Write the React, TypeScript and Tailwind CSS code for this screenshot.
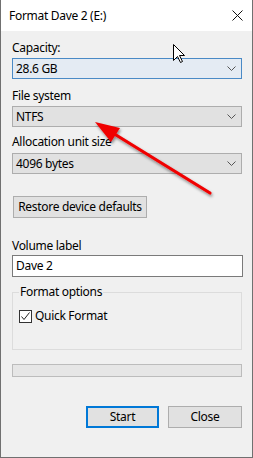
import React from "react";

const font = { fontFamily: '"Noto Sans", "Segoe UI", sans-serif', letterSpacing: "-0.3px" };

function Chevron() {
  return (
    <svg width="9" height="5" viewBox="0 0 9 5" className="shrink-0">
      <path d="M0.5 0.5 L4.5 4.5 L8.5 0.5" fill="none" stroke="#555" strokeWidth="1" />
    </svg>
  );
}

function Combo({ value, active }: { value: string; active?: boolean }) {
  return (
    <div
      className={
        "ml-[11px] w-[230px] h-[21px] border flex items-center justify-between pl-[3px] pr-[5px] " +
        (active ? "border-[#4a8ac6] bg-[#e4ebf3]" : "border-[#adadad] bg-[#e1e1e1]")
      }
    >
      <span className="text-[12px] leading-[16px] text-black">{value}</span>
      <Chevron />
    </div>
  );
}

export default function App() {
  return (
    <div
      className="relative w-[253px] h-[458px] bg-[#f0f0f0] border-l border-r border-b border-[#707070] flex flex-col text-black overflow-hidden"
      style={font}
    >
      {/* title bar */}
      <div className="h-[31px] bg-white flex items-center justify-between pl-[8px] pr-[9px] shrink-0">
        <span className="text-[12px] leading-[16px]">Format Dave 2 (E:)</span>
        <svg width="11" height="11" viewBox="0 0 11 11">
          <path d="M0.5 0.5 L10.5 10.5 M10.5 0.5 L0.5 10.5" stroke="#111" strokeWidth="1" />
        </svg>
      </div>

      <div className="flex flex-col pt-[9px]">
        <div className="ml-[11px] h-[16px] text-[12px] leading-[16px]">Capacity:</div>
        <div className="mt-[2px]">
          <Combo value="28.6 GB" active />
        </div>

        <div className="mt-[9px] ml-[11px] h-[16px] text-[12px] leading-[16px]">File system</div>
        <div className="mt-[2px]">
          <Combo value="NTFS" />
        </div>

        <div className="mt-[7px] ml-[11px] h-[16px] text-[12px] leading-[16px]">Allocation unit size</div>
        <div className="mt-[3px]">
          <Combo value="4096 bytes" />
        </div>

        <div className="mt-[22px] ml-[12px] w-[134px] h-[22px] border border-[#adadad] bg-[#e1e1e1] flex items-center justify-center text-[12px] leading-[16px]">
          Restore device defaults
        </div>

        <div className="mt-[20px] ml-[11px] h-[16px] text-[12px] leading-[16px]">Volume label</div>
        <div className="mt-[1px] ml-[11px] w-[231px] h-[22px] border border-[#7a7a7a] bg-white flex items-center pl-[3px] text-[12px] leading-[16px]">
          Dave 2
        </div>

        <div className="relative mt-[15px] ml-[11px] w-[230px] h-[58px] border border-[#dcdcdc]">
          <span className="absolute left-[6px] top-[-9px] px-[1px] bg-[#f0f0f0] text-[12px] leading-[16px]">
            Format options
          </span>
          <div className="absolute left-[6px] top-[15px] flex items-center gap-[3px]">
            <div className="w-[13px] h-[13px] border border-[#333] bg-white flex items-center justify-center">
              <svg width="11" height="11" viewBox="0 0 11 11">
                <path d="M1.5 5.5 L4 8.5 L9.5 1.5" fill="none" stroke="#222" strokeWidth="1" />
              </svg>
            </div>
            <span className="text-[12px] leading-[16px]">Quick Format</span>
          </div>
        </div>

        <div className="mt-[14px] ml-[11px] w-[230px] h-[13px] border border-[#bcbcbc] bg-[#e6e6e6]" />

        <div className="mt-[29px] ml-[85px] flex gap-[9px]">
          <div className="w-[73px] h-[22px] border-2 border-[#0078d7] bg-[#e1e1e1] flex items-center justify-center text-[12px] leading-[16px]">
            Start
          </div>
          <div className="w-[74px] h-[22px] border border-[#adadad] bg-[#e1e1e1] flex items-center justify-center text-[12px] leading-[16px]">
            Close
          </div>
        </div>
      </div>

      {/* overlay: red arrow and mouse cursor */}
      <svg className="absolute left-[-1px] top-0 pointer-events-none" width="253" height="458" viewBox="0 0 253 458">
        <defs>
          <filter id="sh" x="-20%" y="-20%" width="140%" height="140%">
            <feDropShadow dx="1" dy="2" stdDeviation="1.5" floodColor="#000" floodOpacity="0.45" />
          </filter>
        </defs>
        <g filter="url(#sh)">
          <line x1="112" y1="132.5" x2="210" y2="193" stroke="#f00000" strokeWidth="3.2" strokeLinecap="round" />
          <polygon points="95,122 120,128 111,142" fill="#f00000" />
        </g>
        <path
          d="M173.5 44.5 L173.5 60.5 L177.5 56.5 L180.5 62.5 L182.5 61.5 L179.5 55.5 L184.5 55.5 Z"
          fill="#fff"
          stroke="#000"
          strokeWidth="1"
          strokeLinejoin="round"
        />
      </svg>
    </div>
  );
}
